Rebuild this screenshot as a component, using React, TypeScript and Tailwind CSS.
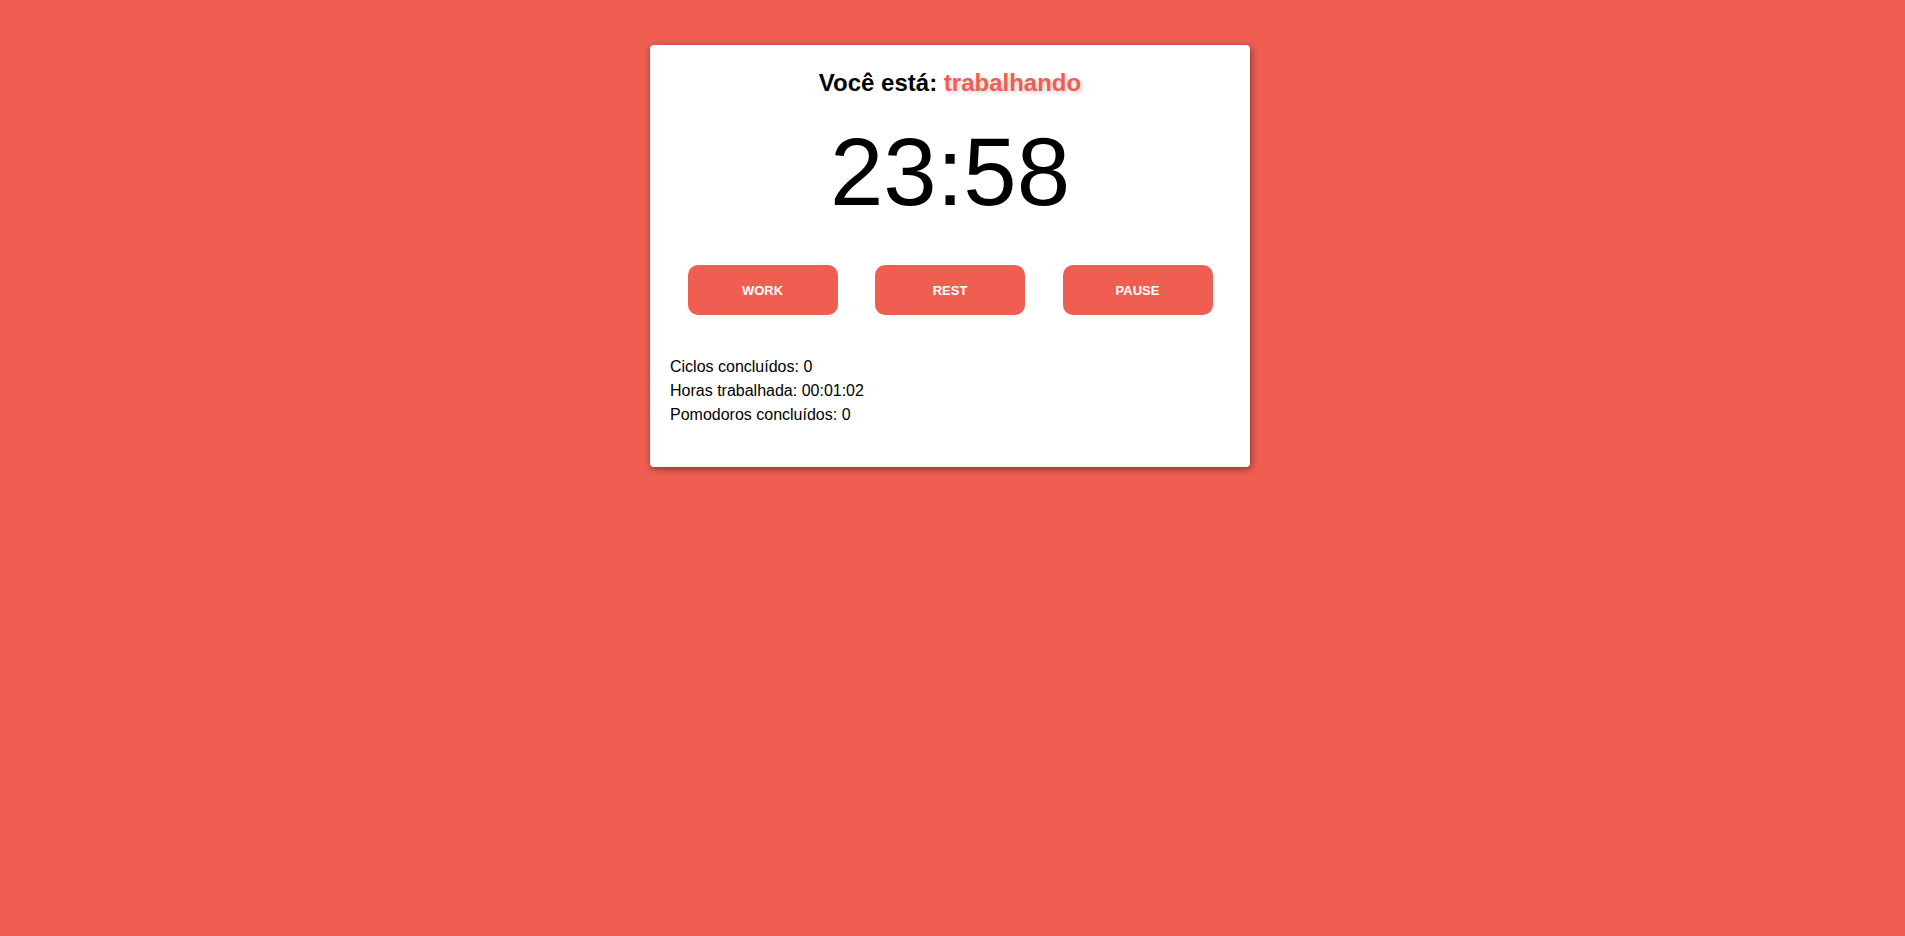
import React from "react";

export default function App() {
  return (
    <div
      className="min-h-screen w-full bg-[#ef5e51] pt-[45px] pr-[5px]"
      style={{ fontFamily: '"Liberation Sans", Arial, sans-serif' }}
    >
      <div className="mx-auto w-[600px] rounded-[4px] bg-white pt-[24px] pb-[40px] shadow-[1px_2px_7px_rgba(0,0,0,0.45)]">
        <h1 className="text-center text-[24px] leading-[28px] font-bold text-black">
          Você está:{" "}
          <span className="text-[#ef5e51] [text-shadow:2px_2px_4px_rgba(0,0,0,0.2)]">
            trabalhando
          </span>
        </h1>
        <div className="mt-[27px] text-center text-[96px] leading-[96px] text-black">
          23:58
        </div>
        <div className="mt-[45px] flex justify-evenly">
          {["WORK", "REST", "PAUSE"].map((t) => (
            <button
              key={t}
              className="h-[50px] w-[150px] rounded-[10px] bg-[#ef5e51] pt-[1px] text-[13px] font-bold text-white"
            >
              {t}
            </button>
          ))}
        </div>
        <div className="mt-[40px] pl-[20px] text-[16px] leading-[24px] text-black">
          <p>Ciclos concluídos: 0</p>
          <p>Horas trabalhada: 00:01:02</p>
          <p>Pomodoros concluídos: 0</p>
        </div>
      </div>
    </div>
  );
}
